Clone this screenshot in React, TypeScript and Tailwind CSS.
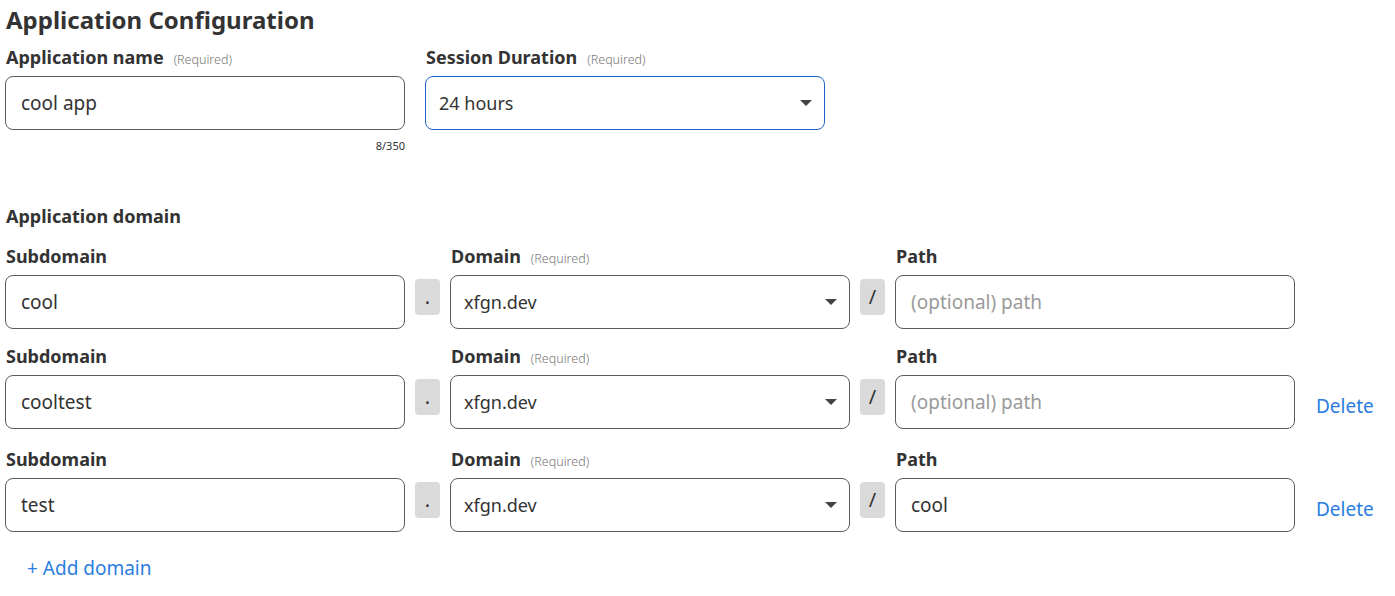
import React from "react";

const font = { fontFamily: '"Noto Sans", "Open Sans", sans-serif' };

const domains = [
  { sub: "cool", path: "", canDelete: false },
  { sub: "cooltest", path: "", canDelete: true },
  { sub: "test", path: "cool", canDelete: true },
];

function Caret() {
  return (
    <svg width="12" height="6" viewBox="0 0 12 6" className="shrink-0">
      <path d="M0 0 L12 0 L6 6 Z" fill="#444" />
    </svg>
  );
}

function Label({ text, required }: { text: string; required?: boolean }) {
  return (
    <div className="flex items-baseline h-[24px] mb-[7px]">
      <span className="text-[18px] leading-[24px] font-bold text-[#333]">{text}</span>
      {required && (
        <span className="ml-[10px] text-[12.5px] font-light text-[#777]">(Required)</span>
      )}
    </div>
  );
}

function TextInput({ value, placeholder }: { value: string; placeholder?: string }) {
  return (
    <div className="w-[400px] h-[54px] rounded-[8px] border border-[#5c5c5c] flex items-center px-[15px] text-[19px]">
      {value ? (
        <span className="text-[#333]">{value}</span>
      ) : (
        <span className="text-[#9a9a9a]">{placeholder}</span>
      )}
    </div>
  );
}

function Select({ value, focused }: { value: string; focused?: boolean }) {
  return (
    <div
      className={`w-[400px] h-[54px] rounded-[8px] border flex items-center justify-between pl-[13px] pr-[12px] text-[18px] text-[#333] ${
        focused ? "border-[#2263c6]" : "border-[#5c5c5c]"
      }`}
    >
      <span>{value}</span>
      <Caret />
    </div>
  );
}

function Sep({ ch }: { ch: string }) {
  return (
    <div className="mt-[35px] mx-[10px] w-[25px] h-[36px] rounded-[4px] bg-[#dadada] flex items-center justify-center text-[20px] text-[#333]">
      {ch}
    </div>
  );
}

export default function App() {
  return (
    <div className="bg-white min-h-screen pl-[5px] pt-[4px]" style={font}>
      <h1 className="pl-[1px] text-[24px] leading-[32px] font-bold text-[#333] mb-[9px]">
        Application Configuration
      </h1>

      <div className="flex gap-[20px]">
        <div className="flex flex-col">
          <div className="pl-[1px]">
            <Label text="Application name" required />
          </div>
          <TextInput value="cool app" />
          <div className="text-right text-[11px] leading-[16px] mt-[8px] text-[#333]">8/350</div>
        </div>
        <div className="flex flex-col">
          <div className="pl-[1px]">
            <Label text="Session Duration" required />
          </div>
          <Select value="24 hours" focused />
        </div>
      </div>

      <div className="mt-[50px] pl-[1px] text-[18px] leading-[24px] font-bold text-[#333] mb-[16px]">
        Application domain
      </div>

      {domains.map((d, i) => (
        <div key={i} className="flex items-start mb-[15px]">
          <div className="flex flex-col">
            <div className="pl-[1px]">
              <Label text="Subdomain" />
            </div>
            <TextInput value={d.sub} />
          </div>
          <Sep ch="." />
          <div className="flex flex-col">
            <div className="pl-[1px]">
              <Label text="Domain" required />
            </div>
            <Select value="xfgn.dev" />
          </div>
          <Sep ch="/" />
          <div className="flex flex-col">
            <div className="pl-[1px]">
              <Label text="Path" />
            </div>
            <TextInput value={d.path} placeholder="(optional) path" />
          </div>
          {d.canDelete && (
            <button className="ml-[21px] mt-[31px] pt-[19px] pb-[14px] text-[19px] leading-[24px] text-[#2b7de0]">
              Delete
            </button>
          )}
        </div>
      ))}

      <button className="mt-[6px] pl-[22px] text-[19px] leading-[24px] text-[#2b7de0]">
        + Add domain
      </button>
    </div>
  );
}
